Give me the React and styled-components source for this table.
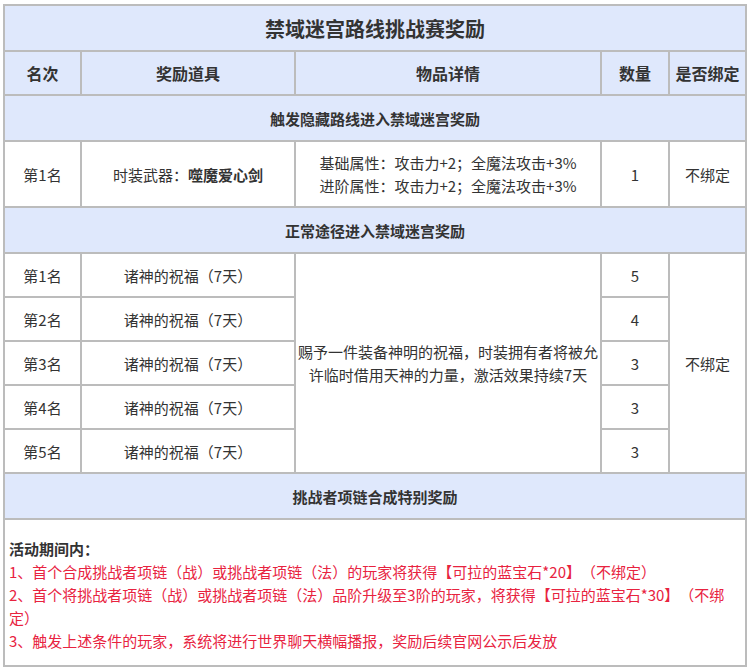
import React from 'react';
import styled, { createGlobalStyle } from 'styled-components';

const GlobalStyle = createGlobalStyle`
  html, body {
    margin: 0;
    padding: 0;
    background: #ffffff;
  }
  body {
    font-family: "Noto Sans CJK SC", "Noto Sans", sans-serif;
    color: #333333;
    text-spacing-trim: space-all;
  }
`;

const COLORS = {
  border: '#bcbcbc',
  head: '#dfe8fc',
  text: '#333333',
  red: '#e8233f',
};

const Page = styled.div`
  padding: 4px 3px 0 3px;
`;

const Table = styled.table`
  width: 742px;
  border-collapse: collapse;
  table-layout: fixed;
  font-size: 15px;
  color: ${COLORS.text};
`;

const Cell = styled.td`
  border: 2px solid ${COLORS.border};
  padding: 0;
  text-align: center;
  vertical-align: middle;
  line-height: 23px;
  height: ${(p) => p.$h || 42}px;
  background: ${(p) => (p.$head ? COLORS.head : '#ffffff')};
  font-weight: ${(p) => (p.$bold ? 700 : 400)};
  font-size: ${(p) => p.$size || 15}px;
`;

const Title = styled(Cell)`
  font-size: 20px;
  font-weight: 700;
`;

const NoteCell = styled.td`
  border: 2px solid ${COLORS.border};
  padding: 17px 4px 13px 4px;
  text-align: left;
  vertical-align: top;
  line-height: 23px;
`;

const NoteTitle = styled.div`
  font-weight: 700;
  color: ${COLORS.text};
`;

const NoteLine = styled.div`
  color: ${COLORS.red};
`;

const normalRows = [
  { rank: '第1名', num: 5 },
  { rank: '第2名', num: 4 },
  { rank: '第3名', num: 3 },
  { rank: '第4名', num: 3 },
  { rank: '第5名', num: 3 },
];

export default function App() {
  return (
    <>
      <GlobalStyle />
      <Page>
        <Table>
          <colgroup>
            <col style={{ width: 77 }} />
            <col style={{ width: 214 }} />
            <col style={{ width: 306 }} />
            <col style={{ width: 68 }} />
            <col style={{ width: 77 }} />
          </colgroup>
          <tbody>
            <tr>
              <Title as="th" colSpan={5} $head $h={44}>禁域迷宫路线挑战赛奖励</Title>
            </tr>
            <tr>
              <Cell as="th" $head $bold $size={16} $h={41}>名次</Cell>
              <Cell as="th" $head $bold $size={16}>奖励道具</Cell>
              <Cell as="th" $head $bold $size={16}>物品详情</Cell>
              <Cell as="th" $head $bold $size={16}>数量</Cell>
              <Cell as="th" $head $bold $size={16}>是否绑定</Cell>
            </tr>
            <tr>
              <Cell colSpan={5} $head $bold $h={44}>触发隐藏路线进入禁域迷宫奖励</Cell>
            </tr>
            <tr>
              <Cell $h={64}>第1名</Cell>
              <Cell>时装武器：<b>噬魔爱心剑</b></Cell>
              <Cell>
                基础属性：攻击力+2；全魔法攻击+3%
                <br />
                进阶属性：攻击力+2；全魔法攻击+3%
              </Cell>
              <Cell>1</Cell>
              <Cell>不绑定</Cell>
            </tr>
            <tr>
              <Cell colSpan={5} $head $bold $h={44}>正常途径进入禁域迷宫奖励</Cell>
            </tr>
            {normalRows.map((row, i) => (
              <tr key={row.rank}>
                <Cell $h={41.1}>{row.rank}</Cell>
                <Cell>诸神的祝福（7天）</Cell>
                {i === 0 && (
                  <Cell rowSpan={5}>
                    赐予一件装备神明的祝福，时装拥有者将被允
                    <br />
                    许临时借用天神的力量，激活效果持续7天
                  </Cell>
                )}
                <Cell>{row.num}</Cell>
                {i === 0 && <Cell rowSpan={5}>不绑定</Cell>}
              </tr>
            ))}
            <tr>
              <Cell colSpan={5} $head $bold $h={44}>挑战者项链合成特别奖励</Cell>
            </tr>
            <tr>
              <NoteCell colSpan={5}>
                <NoteTitle>活动期间内：</NoteTitle>
                <NoteLine>1、首个合成挑战者项链（战）或挑战者项链（法）的玩家将获得【可拉的蓝宝石*20】（不绑定）</NoteLine>
                <NoteLine>2、首个将挑战者项链（战）或挑战者项链（法）品阶升级至3阶的玩家，将获得【可拉的蓝宝石*30】（不绑定）</NoteLine>
                <NoteLine>3、触发上述条件的玩家，系统将进行世界聊天横幅播报，奖励后续官网公示后发放</NoteLine>
              </NoteCell>
            </tr>
          </tbody>
        </Table>
      </Page>
    </>
  );
}
